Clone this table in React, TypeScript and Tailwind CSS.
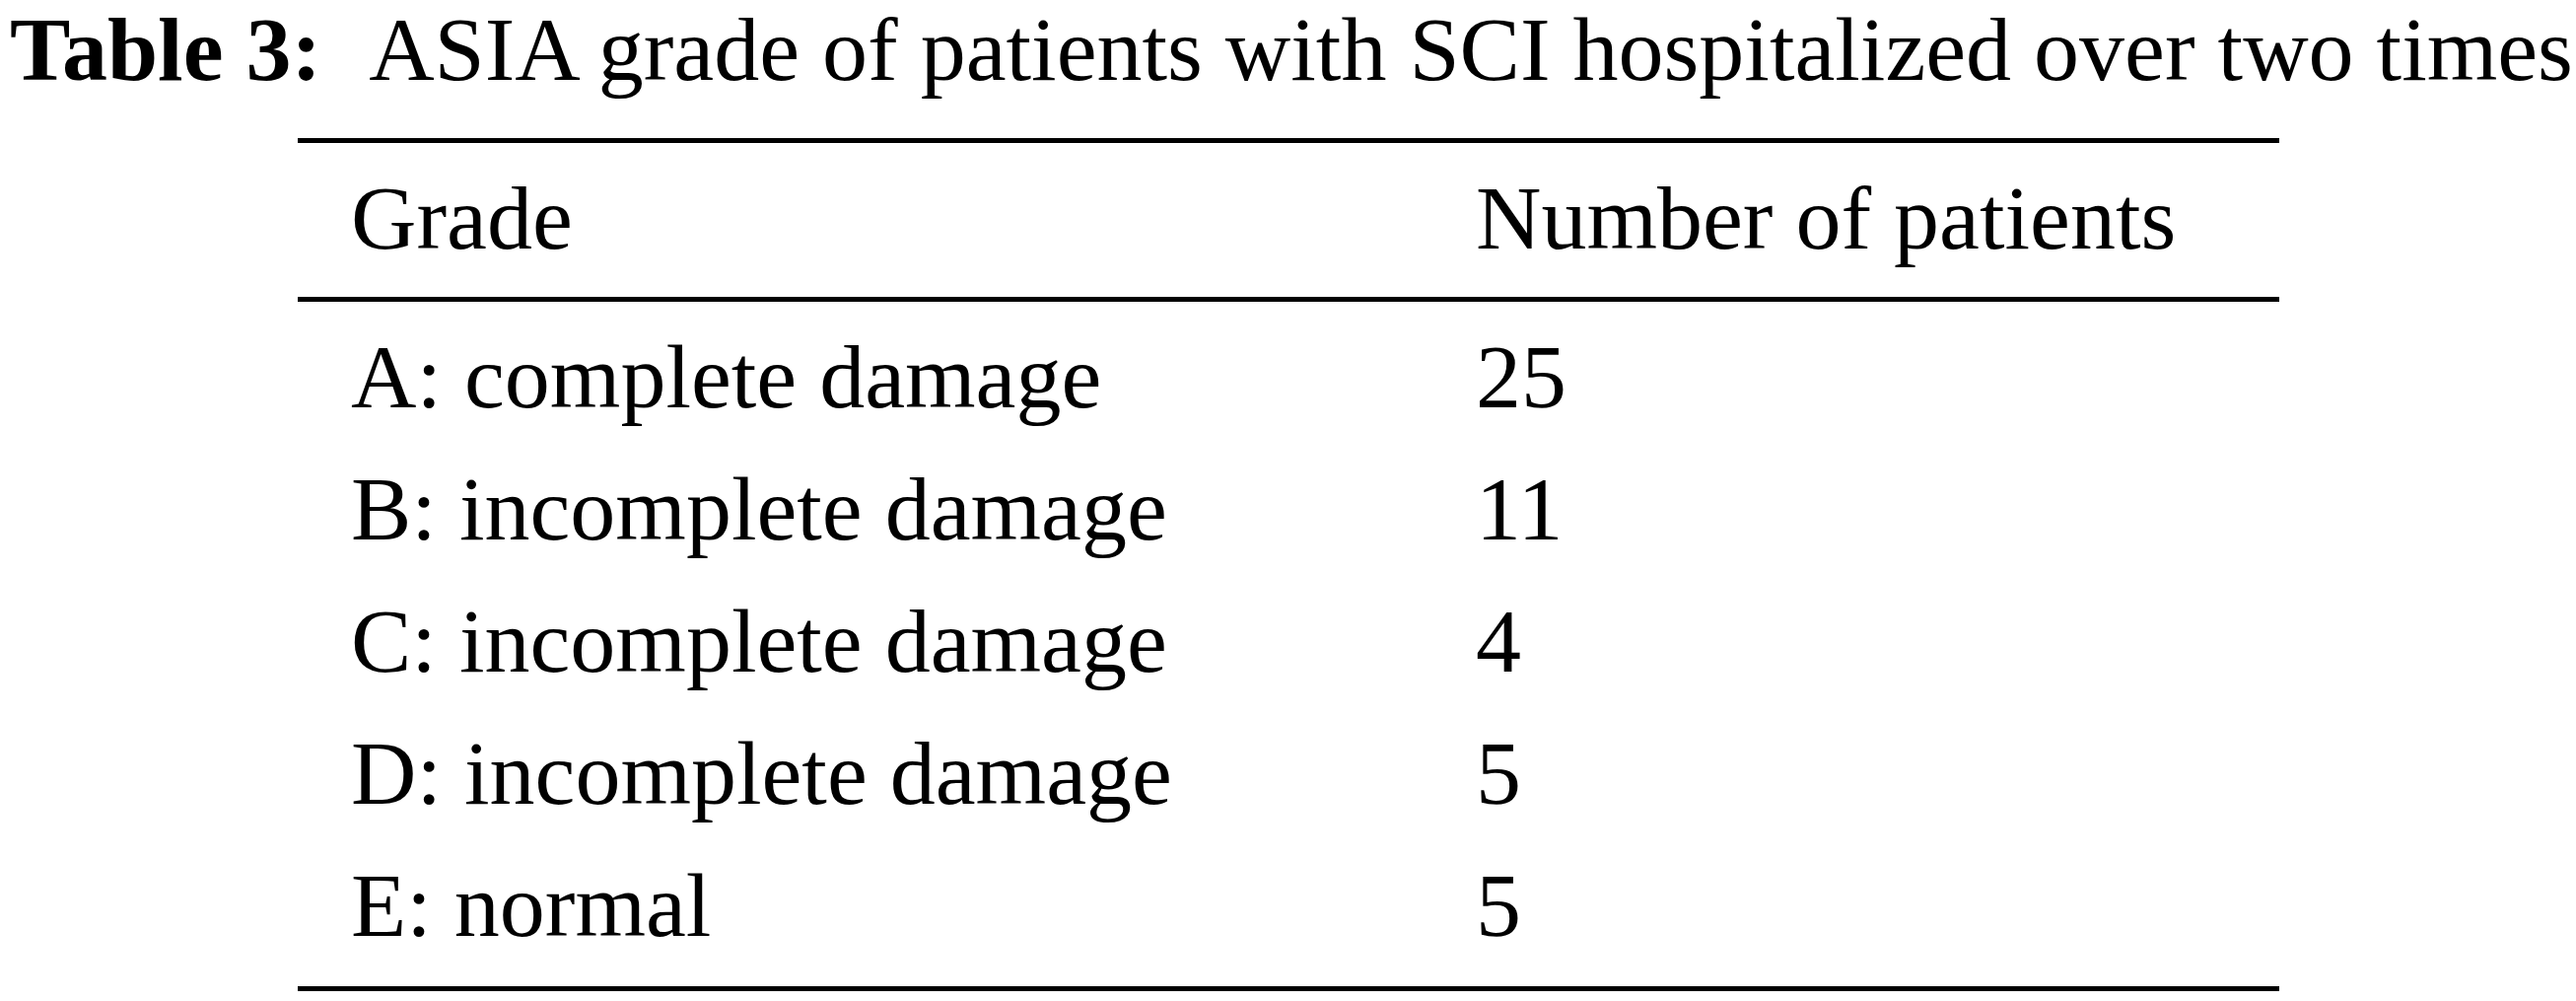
export default function App() {
  const rows: [string, string][] = [
    ["A: complete damage", "25"],
    ["B: incomplete damage", "11"],
    ["C: incomplete damage", "4"],
    ["D: incomplete damage", "5"],
    ["E: normal", "5"],
  ];
  return (
    <div
      className="w-[2613px] h-[1015px] bg-white text-black overflow-hidden"
      style={{ fontFamily: '"Liberation Serif", "Times New Roman", serif' }}
    >
      <div className="pl-[10px] text-[92px] leading-[100px] whitespace-nowrap">
        <span className="font-bold">Table 3:</span>
        <span className="ml-[48px]">ASIA grade of patients with SCI hospitalized over two times</span>
      </div>
      <div className="ml-[302px] mt-[40px] w-[2010px] border-t-[5px] border-b-[5px] border-black">
        <div className="grid grid-cols-[1195px_1fr] text-[92px] leading-[134px] pt-[9px] pb-[13px] border-b-[5px] border-black whitespace-nowrap">
          <div className="pl-[54px]">Grade</div>
          <div>Number of patients</div>
        </div>
        <div className="pt-[9px] pb-[15px]">
          {rows.map(([g, n]) => (
            <div key={g} className="grid grid-cols-[1195px_1fr] text-[92px] leading-[134px] whitespace-nowrap">
              <div className="pl-[54px]">{g}</div>
              <div>{n}</div>
            </div>
          ))}
        </div>
      </div>
    </div>
  );
}
